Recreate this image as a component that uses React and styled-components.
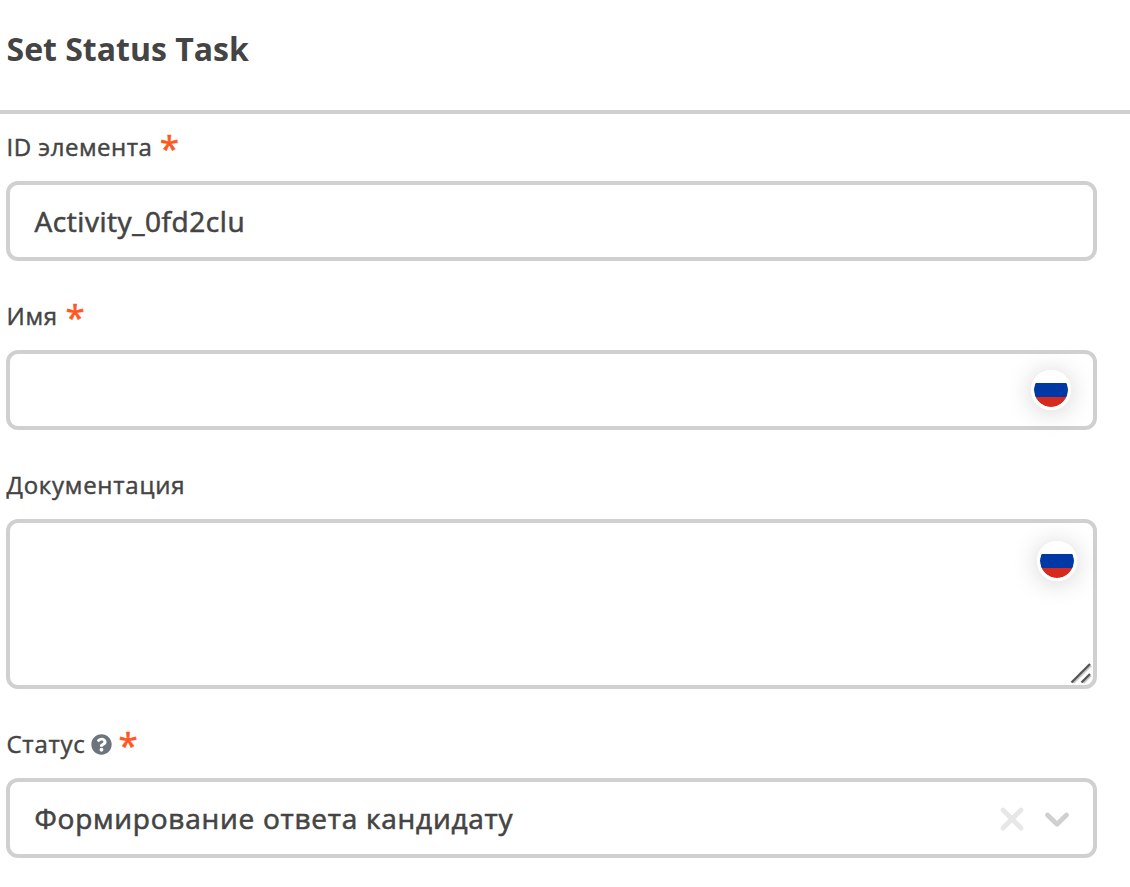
import React from "react";
import styled, { createGlobalStyle } from "styled-components";
import { FaQuestionCircle } from "react-icons/fa";

const GlobalStyle = createGlobalStyle`
  *, *::before, *::after { box-sizing: border-box; }
  body {
    margin: 0;
    background: #fff;
    color: #444;
    font-family: "Open Sans", "Noto Sans", sans-serif;
  }
`;

const Panel = styled.main`
  display: flex;
  flex-direction: column;
  height: 887px;
  overflow: hidden;
`;

const Header = styled.header`
  height: 114px;
  padding: 27px 6.5px 0;
  border-bottom: 4px solid #d0d0d0;
`;

const Title = styled.h1`
  margin: 0;
  font-size: 32px;
  line-height: 44px;
  font-weight: 700;
`;

const Form = styled.form`
  display: flex;
  flex-direction: column;
  gap: 22px;
  padding: 0 33px 0 6px;
`;

const Field = styled.div`
  display: flex;
  flex-direction: column;
`;

const Label = styled.label`
  display: flex;
  align-items: center;
  height: 67px;
  padding: 16px 0 17px 0.5px;
  font-size: 24px;
  line-height: 34px;
  letter-spacing: ${(p) => p.$tracking}px;
  -webkit-text-stroke: 0.45px currentColor;
`;

const HelpIcon = styled(FaQuestionCircle)`
  width: 21px;
  height: 21px;
  margin: 1px -1px 0 5.5px;
  color: #6c757d;
`;

const Required = styled.span`
  height: 34px;
  margin-left: 7.5px;
  color: #ff5722;
  font-size: 35px;
  line-height: 36px;
  letter-spacing: 0;
  -webkit-text-stroke: 0.6px currentColor;
`;

const Control = styled.div`
  display: flex;
  position: relative;
  align-items: ${(p) => (p.$tall ? "flex-start" : "center")};
  height: ${(p) => (p.$tall ? 170 : 80)}px;
  padding: ${(p) => (p.$tall ? "18px 16px 0 24px" : "0 22px 0 24px")};
  border: 4px solid #d0d0d0;
  border-radius: 12px;
  font-size: 28px;
  line-height: 38px;
`;

const Value = styled.span`
  flex: 1;
  padding-left: 0.5px;
  white-space: nowrap;
  letter-spacing: ${(p) => p.$tracking || 0}px;
  -webkit-text-stroke: 0.6px currentColor;
`;

const Flag = styled.span`
  width: 40px;
  height: 40px;
  border: 3px solid #fff;
  border-radius: 50%;
  background: linear-gradient(#fff 10.3px, #0039a6 10.3px 23.6px, #d52b1e 23.6px) padding-box;
  box-shadow: 0 2px 26px rgba(0, 0, 0, 0.18);
`;

const ResizeGrip = styled.svg`
  position: absolute;
  right: 1px;
  bottom: 1px;
`;

const Actions = styled.svg`
  display: block;
  flex: none;
  margin: -2px 1px 0 0;
`;

const RussianFlag = () => <Flag role="img" aria-label="Русский" />;

function FormField({ label, tracking = 0.75, required, help, tall, children }) {
  return (
    <Field>
      <Label $tracking={tracking}>
        {label}
        {help && <HelpIcon />}
        {required && <Required>*</Required>}
      </Label>
      <Control $tall={tall}>{children}</Control>
    </Field>
  );
}

export default function App() {
  return (
    <Panel>
      <GlobalStyle />
      <Header>
        <Title>Set Status Task</Title>
      </Header>
      <Form>
        <FormField label="ID элемента" tracking={0.5} required>
          <Value $tracking={0.56}>Activity_0fd2clu</Value>
        </FormField>
        <FormField label="Имя" required>
          <Value />
          <RussianFlag />
        </FormField>
        <FormField label="Документация" tall>
          <Value />
          <RussianFlag />
          <ResizeGrip width="22" height="22" viewBox="0 0 22 22" fill="none">
            <path d="M3.5 21 21 3.5M13.5 21l7.5-7.5" stroke="#c8c8c8" strokeWidth="2" />
            <path d="M1.5 20.5 20 2M11.5 20.5 20 12" stroke="#555" strokeWidth="2.3" />
          </ResizeGrip>
        </FormField>
        <FormField label="Статус" help required>
          <Value $tracking={0.75}>Формирование ответа кандидату</Value>
          <Actions width="72" height="28" viewBox="0 0 72 28" fill="none" strokeLinecap="round" strokeLinejoin="round">
            <path d="M5 7 23 25M23 7 5 25" stroke="#e7e7e7" strokeWidth="4.8" />
            <path d="M49.5 12 59 21.2 68.5 12" stroke="#d0d0d0" strokeWidth="4.8" />
          </Actions>
        </FormField>
      </Form>
    </Panel>
  );
}
